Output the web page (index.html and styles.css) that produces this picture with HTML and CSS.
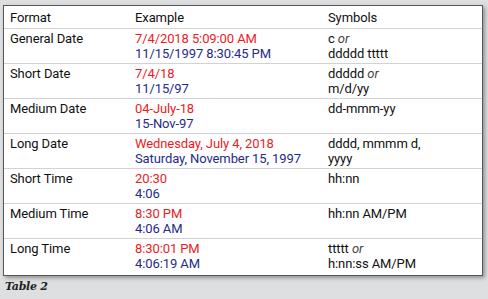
FILE: index.html
```html
<!DOCTYPE html>
<html>
<head>
<meta charset="utf-8">
<link rel="stylesheet" href="styles.css">
</head>
<body>
<div class="panel">
  <div class="row head">
    <div>Format</div><div>Example</div><div>Symbols</div>
  </div>
  <div class="row">
    <div>General Date</div>
    <div><span class="r">7/4/2018 5:09:00 AM</span><br><span class="b">11/15/1997 8:30:45 PM</span></div>
    <div>c <i>or</i><br>ddddd ttttt</div>
  </div>
  <div class="row">
    <div>Short Date</div>
    <div><span class="r">7/4/18</span><br><span class="b">11/15/97</span></div>
    <div>ddddd <i>or</i><br>m/d/yy</div>
  </div>
  <div class="row">
    <div>Medium Date</div>
    <div><span class="r">04-July-18</span><br><span class="b">15-Nov-97</span></div>
    <div>dd-mmm-yy</div>
  </div>
  <div class="row">
    <div>Long Date</div>
    <div><span class="r">Wednesday, July 4, 2018</span><br><span class="b">Saturday, November 15, 1997</span></div>
    <div>dddd, mmmm d,<br>yyyy</div>
  </div>
  <div class="row">
    <div>Short Time</div>
    <div><span class="r">20:30</span><br><span class="b">4:06</span></div>
    <div>hh:nn</div>
  </div>
  <div class="row">
    <div>Medium Time</div>
    <div><span class="r">8:30 PM</span><br><span class="b">4:06 AM</span></div>
    <div>hh:nn AM/PM</div>
  </div>
  <div class="row last">
    <div>Long Time</div>
    <div><span class="r">8:30:01 PM</span><br><span class="b">4:06:19 AM</span></div>
    <div>ttttt <i>or</i><br>h:nn:ss AM/PM</div>
  </div>
</div>
<div class="caption">Table 2</div>
</body>
</html>
```
FILE: styles.css
```css
html, body {
  margin: 0;
  padding: 0;
}
body {
  width: 488px;
  height: 299px;
  background: #dedfe0;
  font-family: Roboto, "Liberation Sans", sans-serif;
  font-size: 13px;
  color: #111;
  overflow: hidden;
}
.panel {
  margin: 5px 0 0 3px;
  width: 478px;
  background: #fff;
  border: 1px solid #575757;
  box-shadow: 2px 2px 4px rgba(0,0,0,0.35);
}
.row {
  display: grid;
  grid-template-columns: 125px 193px 1fr;
  padding: 2px 0 2px 6px;
  line-height: 15px;
  border-top: 1px solid #d2d2d2;
  letter-spacing: -0.1px;
}
.row.head {
  border-top: none;
  padding: 4px 0 3px 6px;
}
.row.last {
  padding-bottom: 4px;
}
.r { color: #ec1c24; }
.b { color: #1f2b8a; }
i { color: #444; }
.caption {
  margin: 4px 0 0 5px;
  font-family: "DejaVu Serif", "Liberation Serif", serif;
  font-weight: bold;
  font-style: italic;
  font-size: 11px;
  color: #222;
  letter-spacing: -0.3px;
}
```
